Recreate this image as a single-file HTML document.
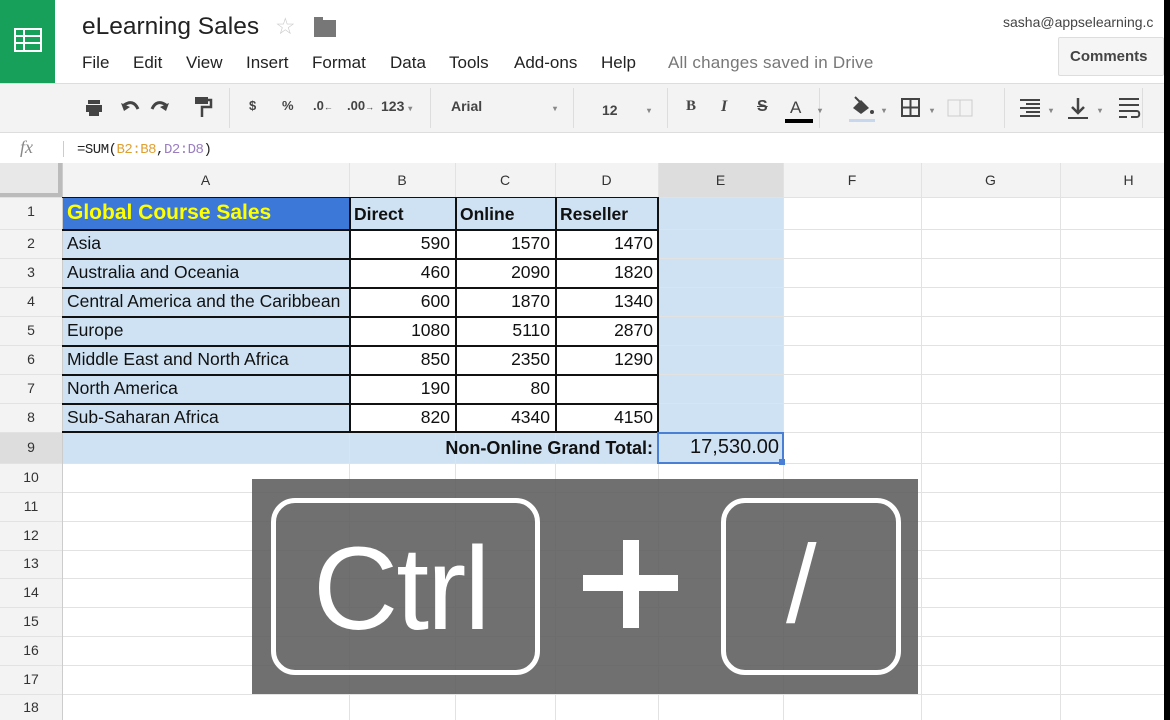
<!DOCTYPE html>
<html><head><meta charset="utf-8"><style>
*{margin:0;padding:0;box-sizing:border-box}
body{width:1170px;height:720px;position:relative;overflow:hidden;background:#fff;font-family:"Liberation Sans",Arial,sans-serif;color:#222}
.a{position:absolute}
.hl{position:absolute;left:0;width:1170px;height:1px;background:#e2e2e2}
.vl{position:absolute;top:163px;height:557px;width:1px;background:#e2e2e2}
.rn{position:absolute;left:0;width:62px;text-align:center;font-size:14px;color:#333}
.ch{position:absolute;top:163px;height:34px;line-height:34px;text-align:center;font-size:14px;color:#333}
.c{position:absolute;font-size:17.5px;line-height:29px;color:#111;white-space:nowrap;overflow:hidden}
.r{text-align:right;padding-right:5px}
.l{padding-left:5px}
.m{position:absolute;top:53px;font-size:17px;color:#222}
.tb{position:absolute;top:98px;font-size:15px;color:#444;font-weight:bold}
</style></head><body>
<!-- header -->
<div class="a" style="left:0;top:0;width:55px;height:83px;background:#16a05a"></div>
<svg class="a" style="left:14px;top:28px" width="28" height="24" viewBox="0 0 28 24"><rect x="1" y="1" width="26" height="22" fill="none" stroke="#fff" stroke-width="2"/><path d="M1 8H27M1 15H27M10 1V23" stroke="#fff" stroke-width="2"/></svg>
<div class="a" style="left:82px;top:13px;font-size:24.5px;color:#222">eLearning Sales</div>
<div class="a" style="left:275px;top:13px;font-size:23px;color:#ccc">☆</div>
<div class="a" style="left:314px;top:20px;width:22px;height:17px;background:#777"></div>
<div class="a" style="left:314px;top:17px;width:9px;height:4px;background:#777"></div>
<div class="m" style="left:82px">File</div>
<div class="m" style="left:133px">Edit</div>
<div class="m" style="left:186px">View</div>
<div class="m" style="left:246px">Insert</div>
<div class="m" style="left:312px">Format</div>
<div class="m" style="left:390px">Data</div>
<div class="m" style="left:449px">Tools</div>
<div class="m" style="left:514px">Add-ons</div>
<div class="m" style="left:601px">Help</div>
<div class="m" style="left:668px;color:#777;letter-spacing:0.2px">All changes saved in Drive</div>
<div class="a" style="left:1003px;top:14px;font-size:14px;color:#444">sasha@appselearning.c</div>
<div class="a" style="left:1058px;top:37px;width:106px;height:39px;background:#f5f5f5;border:1px solid #ddd;border-radius:2px;font-size:15px;font-weight:bold;color:#444;line-height:37px;padding-left:11px">Comments</div>
<!-- toolbar -->
<div class="a" style="left:0;top:83px;width:1170px;height:50px;background:#f3f3f3;border-top:1px solid #ddd;border-bottom:1px solid #ddd"></div>
<div class="a" style="left:229px;top:88px;width:1px;height:40px;background:#ddd"></div>
<div class="a" style="left:430px;top:88px;width:1px;height:40px;background:#ddd"></div>
<div class="a" style="left:573px;top:88px;width:1px;height:40px;background:#ddd"></div>
<div class="a" style="left:667px;top:88px;width:1px;height:40px;background:#ddd"></div>
<div class="a" style="left:819px;top:88px;width:1px;height:40px;background:#ddd"></div>
<div class="a" style="left:1004px;top:88px;width:1px;height:40px;background:#ddd"></div>
<div class="a" style="left:1142px;top:88px;width:1px;height:40px;background:#ddd"></div>
<svg class="a" style="left:84px;top:96px" width="140" height="24" viewBox="0 0 140 24"><rect x="4" y="4" width="12" height="4" fill="#444"/><rect x="2" y="9" width="16" height="7" fill="#444"/><rect x="5" y="15" width="10" height="5" fill="#444"/><path d="M40 9c6-4 11-3 14 4" stroke="#444" stroke-width="3" fill="none"/><path d="M37 7l3 8 6-4z" fill="#444"/><path d="M82 9c-6-4-11-3-14 4" stroke="#444" stroke-width="3" fill="none"/><path d="M85 7l-3 8-6-4z" fill="#444"/><rect x="111" y="1" width="13" height="7" fill="#444"/><path d="M124 4h3v7h-9v10" stroke="#444" stroke-width="2.5" fill="none"/></svg>
<div class="tb" style="left:249px;font-size:13px">$</div>
<div class="tb" style="left:282px;font-size:13px">%</div>
<div class="tb" style="left:313px;font-size:13px">.0<span style="font-size:9px">←</span></div>
<div class="tb" style="left:347px;font-size:13px">.00<span style="font-size:9px">→</span></div>
<div class="tb" style="left:381px;font-size:14px">123 <span style="font-size:8px;color:#888">▾</span></div>
<div class="tb" style="left:451px;font-size:14px">Arial</div>
<div class="tb" style="left:553px;font-size:8px;color:#888;top:104px">▾</div>
<div class="tb" style="left:602px;font-size:14px;top:102px">12</div>
<div class="tb" style="left:647px;font-size:8px;color:#888;top:106px">▾</div>
<div class="tb" style="left:686px;font-size:15px;font-family:'Liberation Serif',serif">B</div>
<div class="tb" style="left:721px;font-size:16px;font-style:italic;font-family:'Liberation Serif',serif">I</div>
<div class="tb" style="left:757px;font-size:16px;text-decoration:line-through">S</div>
<div class="tb" style="left:790px;font-size:17px;font-weight:normal">A</div>
<div class="a" style="left:785px;top:119px;width:28px;height:4px;background:#000"></div>
<div class="tb" style="left:818px;font-size:8px;color:#888;top:106px">▾</div>
<svg class="a" style="left:848px;top:95px" width="30" height="28" viewBox="0 0 30 28"><path d="M5 13l8-8 8 8-8 6z" fill="#444"/><path d="M7 2l6 6" stroke="#444" stroke-width="2"/><circle cx="24" cy="17" r="2" fill="#444"/><rect x="1" y="24" width="26" height="3" fill="#c6d7ee"/></svg>
<div class="tb" style="left:882px;font-size:8px;color:#888;top:106px">▾</div>
<svg class="a" style="left:901px;top:98px" width="20" height="20"><rect x="1" y="1" width="17" height="17" fill="none" stroke="#444" stroke-width="2"/><path d="M9.5 1V18M1 9.5H18" stroke="#444" stroke-width="2"/></svg>
<div class="tb" style="left:930px;font-size:8px;color:#888;top:106px">▾</div>
<svg class="a" style="left:947px;top:99px" width="26" height="18"><rect x="1" y="1" width="24" height="16" fill="none" stroke="#ccc"/><path d="M13 1v16" stroke="#ccc"/></svg>
<svg class="a" style="left:1018px;top:98px" width="24" height="20"><path d="M2 2h20M8 6h14M2 10h20M8 14h14M2 18h20" stroke="#444" stroke-width="2"/></svg>
<div class="tb" style="left:1049px;font-size:8px;color:#888;top:106px">▾</div>
<svg class="a" style="left:1066px;top:96px" width="24" height="24"><path d="M12 2v14M6 11l6 6 6-6" stroke="#444" stroke-width="2.5" fill="none"/><path d="M2 22h20" stroke="#444" stroke-width="2"/></svg>
<div class="tb" style="left:1098px;font-size:8px;color:#888;top:106px">▾</div>
<svg class="a" style="left:1117px;top:96px" width="24" height="24"><path d="M2 3h20M2 9h20M2 15h12M2 21h8" stroke="#444" stroke-width="2"/><path d="M14 15h6c3 0 3 6 0 6h-6" stroke="#444" stroke-width="2" fill="none"/></svg>
<!-- formula bar -->
<div class="a" style="left:20px;top:137px;font-size:18px;font-style:italic;color:#888;font-family:'Liberation Serif',serif">fx</div>
<div class="a" style="left:63px;top:141px;width:1px;height:16px;background:#ccc"></div>
<div class="a" style="left:77px;top:142px;font-size:14px;font-family:'Liberation Mono',monospace;letter-spacing:-0.5px">=SUM(<span style="color:#e0a030">B2:B8</span>,<span style="color:#9a7ec0">D2:D8</span>)</div>
<div class="a" style="left:0;top:163px;width:1170px;height:1px;background:#ccc"></div>
<!-- headers -->
<div class="a" style="left:0;top:163px;width:62px;height:557px;background:#f3f3f3"></div>
<div class="a" style="left:0;top:163px;width:1170px;height:34px;background:#f3f3f3"></div>
<div class="a" style="left:0;top:163px;width:62px;height:34px;background:#e8e8e8;border-right:4px solid #bbb;border-bottom:4px solid #bbb"></div>
<div class="a" style="left:658px;top:163px;width:125px;height:34px;background:#ddd"></div>
<div class="a" style="left:0;top:432px;width:62px;height:31px;background:#ddd"></div>
<!-- fills -->
<div class="a" style="left:62px;top:197px;width:287px;height:266px;background:#cfe2f3"></div>
<div class="a" style="left:349px;top:197px;width:309px;height:32px;background:#cfe2f3"></div>
<div class="a" style="left:349px;top:432px;width:309px;height:31px;background:#cfe2f3"></div>
<div class="a" style="left:658px;top:197px;width:125px;height:266px;background:#cfe2f3"></div>
<div class="a" style="left:62px;top:197px;width:287px;height:32px;background:#3c78d8"></div>
<!-- grid lines -->
<div class="hl" style="top:197px"></div><div class="hl" style="top:229px"></div><div class="hl" style="top:258px"></div><div class="hl" style="top:287px"></div><div class="hl" style="top:316px"></div><div class="hl" style="top:345px"></div><div class="hl" style="top:374px"></div><div class="hl" style="top:403px"></div><div class="hl" style="top:432px"></div><div class="hl" style="top:463px"></div><div class="hl" style="top:492px"></div><div class="hl" style="top:521px"></div><div class="hl" style="top:550px"></div><div class="hl" style="top:578px"></div><div class="hl" style="top:607px"></div><div class="hl" style="top:636px"></div><div class="hl" style="top:665px"></div><div class="hl" style="top:694px"></div>
<div class="vl" style="left:62px;background:#ccc"></div><div class="vl" style="left:349px"></div><div class="vl" style="left:455px"></div><div class="vl" style="left:555px"></div><div class="vl" style="left:658px"></div><div class="vl" style="left:783px"></div><div class="vl" style="left:921px"></div><div class="vl" style="left:1060px"></div>
<!-- black borders -->
<div class="a" style="left:62px;top:197px;width:597px;height:236px;border:1px solid #111;border-left:none"></div>
<div class="a" style="left:349px;top:197px;width:2px;height:236px;background:#111"></div>
<div class="a" style="left:455px;top:197px;width:2px;height:236px;background:#111"></div>
<div class="a" style="left:555px;top:197px;width:2px;height:236px;background:#111"></div>
<div class="a" style="left:657px;top:197px;width:2px;height:236px;background:#111"></div>
<div class="a" style="left:62px;top:229px;width:597px;height:2px;background:#111"></div>
<div class="a" style="left:62px;top:258px;width:597px;height:2px;background:#111"></div>
<div class="a" style="left:62px;top:287px;width:597px;height:2px;background:#111"></div>
<div class="a" style="left:62px;top:316px;width:597px;height:2px;background:#111"></div>
<div class="a" style="left:62px;top:345px;width:597px;height:2px;background:#111"></div>
<div class="a" style="left:62px;top:374px;width:597px;height:2px;background:#111"></div>
<div class="a" style="left:62px;top:403px;width:597px;height:2px;background:#111"></div>
<div class="a" style="left:62px;top:431px;width:597px;height:2px;background:#111"></div>
<!-- column headers -->
<div class="ch" style="left:62px;width:287px">A</div><div class="ch" style="left:349px;width:106px">B</div><div class="ch" style="left:455px;width:100px">C</div><div class="ch" style="left:555px;width:103px">D</div><div class="ch" style="left:658px;width:125px">E</div><div class="ch" style="left:783px;width:138px">F</div><div class="ch" style="left:921px;width:139px">G</div><div class="ch" style="left:1060px;width:137px">H</div>
<!-- row numbers -->
<div class="rn" style="top:203px">1</div><div class="rn" style="top:235px">2</div><div class="rn" style="top:264px">3</div><div class="rn" style="top:293px">4</div><div class="rn" style="top:322px">5</div><div class="rn" style="top:351px">6</div><div class="rn" style="top:380px">7</div><div class="rn" style="top:409px">8</div><div class="rn" style="top:439px">9</div><div class="rn" style="top:469px">10</div><div class="rn" style="top:498px">11</div><div class="rn" style="top:527px">12</div><div class="rn" style="top:555px">13</div><div class="rn" style="top:584px">14</div><div class="rn" style="top:613px">15</div><div class="rn" style="top:642px">16</div><div class="rn" style="top:671px">17</div><div class="rn" style="top:699px">18</div>
<!-- cells -->
<div class="c l" style="left:62px;top:199px;font-size:21px;font-weight:bold;color:#ffff00;line-height:28px">Global Course Sales</div>
<div class="c l" style="left:349px;top:200px;font-weight:bold">Direct</div>
<div class="c l" style="left:455px;top:200px;font-weight:bold">Online</div>
<div class="c l" style="left:555px;top:200px;font-weight:bold">Reseller</div>
<div class="c l" style="left:62px;top:229px">Asia</div>
<div class="c l" style="left:62px;top:258px">Australia and Oceania</div>
<div class="c l" style="left:62px;top:287px;width:287px">Central America and the Caribbean</div>
<div class="c l" style="left:62px;top:316px">Europe</div>
<div class="c l" style="left:62px;top:345px">Middle East and North Africa</div>
<div class="c l" style="left:62px;top:374px">North America</div>
<div class="c l" style="left:62px;top:403px">Sub-Saharan Africa</div>
<div class="c r" style="left:349px;width:106px;top:229px">590</div><div class="c r" style="left:455px;width:100px;top:229px">1570</div><div class="c r" style="left:555px;width:103px;top:229px">1470</div>
<div class="c r" style="left:349px;width:106px;top:258px">460</div><div class="c r" style="left:455px;width:100px;top:258px">2090</div><div class="c r" style="left:555px;width:103px;top:258px">1820</div>
<div class="c r" style="left:349px;width:106px;top:287px">600</div><div class="c r" style="left:455px;width:100px;top:287px">1870</div><div class="c r" style="left:555px;width:103px;top:287px">1340</div>
<div class="c r" style="left:349px;width:106px;top:316px">1080</div><div class="c r" style="left:455px;width:100px;top:316px">5110</div><div class="c r" style="left:555px;width:103px;top:316px">2870</div>
<div class="c r" style="left:349px;width:106px;top:345px">850</div><div class="c r" style="left:455px;width:100px;top:345px">2350</div><div class="c r" style="left:555px;width:103px;top:345px">1290</div>
<div class="c r" style="left:349px;width:106px;top:374px">190</div><div class="c r" style="left:455px;width:100px;top:374px">80</div>
<div class="c r" style="left:349px;width:106px;top:403px">820</div><div class="c r" style="left:455px;width:100px;top:403px">4340</div><div class="c r" style="left:555px;width:103px;top:403px">4150</div>
<div class="c r" style="left:349px;width:309px;top:434px;font-weight:bold;font-size:18px">Non-Online Grand Total:</div>
<div class="a" style="left:657px;top:432px;width:127px;height:32px;border:2px solid #4a7fd6"></div>
<div class="c r" style="left:658px;width:125px;top:433px;font-size:20px;padding-right:4px">17,530.00</div>
<div class="a" style="left:779px;top:459px;width:6px;height:6px;background:#4a7fd6"></div>
<!-- overlay -->
<div class="a" style="left:252px;top:479px;width:666px;height:215px;background:rgba(96,96,96,0.9)"></div>
<div class="a" style="left:271px;top:498px;width:269px;height:177px;border:5px solid #fff;border-radius:24px"></div>
<div class="a" style="left:721px;top:498px;width:180px;height:177px;border:5px solid #fff;border-radius:24px"></div>
<div class="a" style="left:313px;top:530px;font-size:118px;color:#fff;line-height:118px;letter-spacing:-2px">Ctrl</div>
<div class="a" style="left:583px;top:575px;width:95px;height:16px;background:#fff"></div>
<div class="a" style="left:623px;top:540px;width:16px;height:88px;background:#fff"></div>
<div class="a" style="left:786px;top:530px;font-size:110px;color:#fff;line-height:110px">/</div>
<div class="a" style="left:1164px;top:0;width:6px;height:720px;background:#000"></div>
</body></html>
